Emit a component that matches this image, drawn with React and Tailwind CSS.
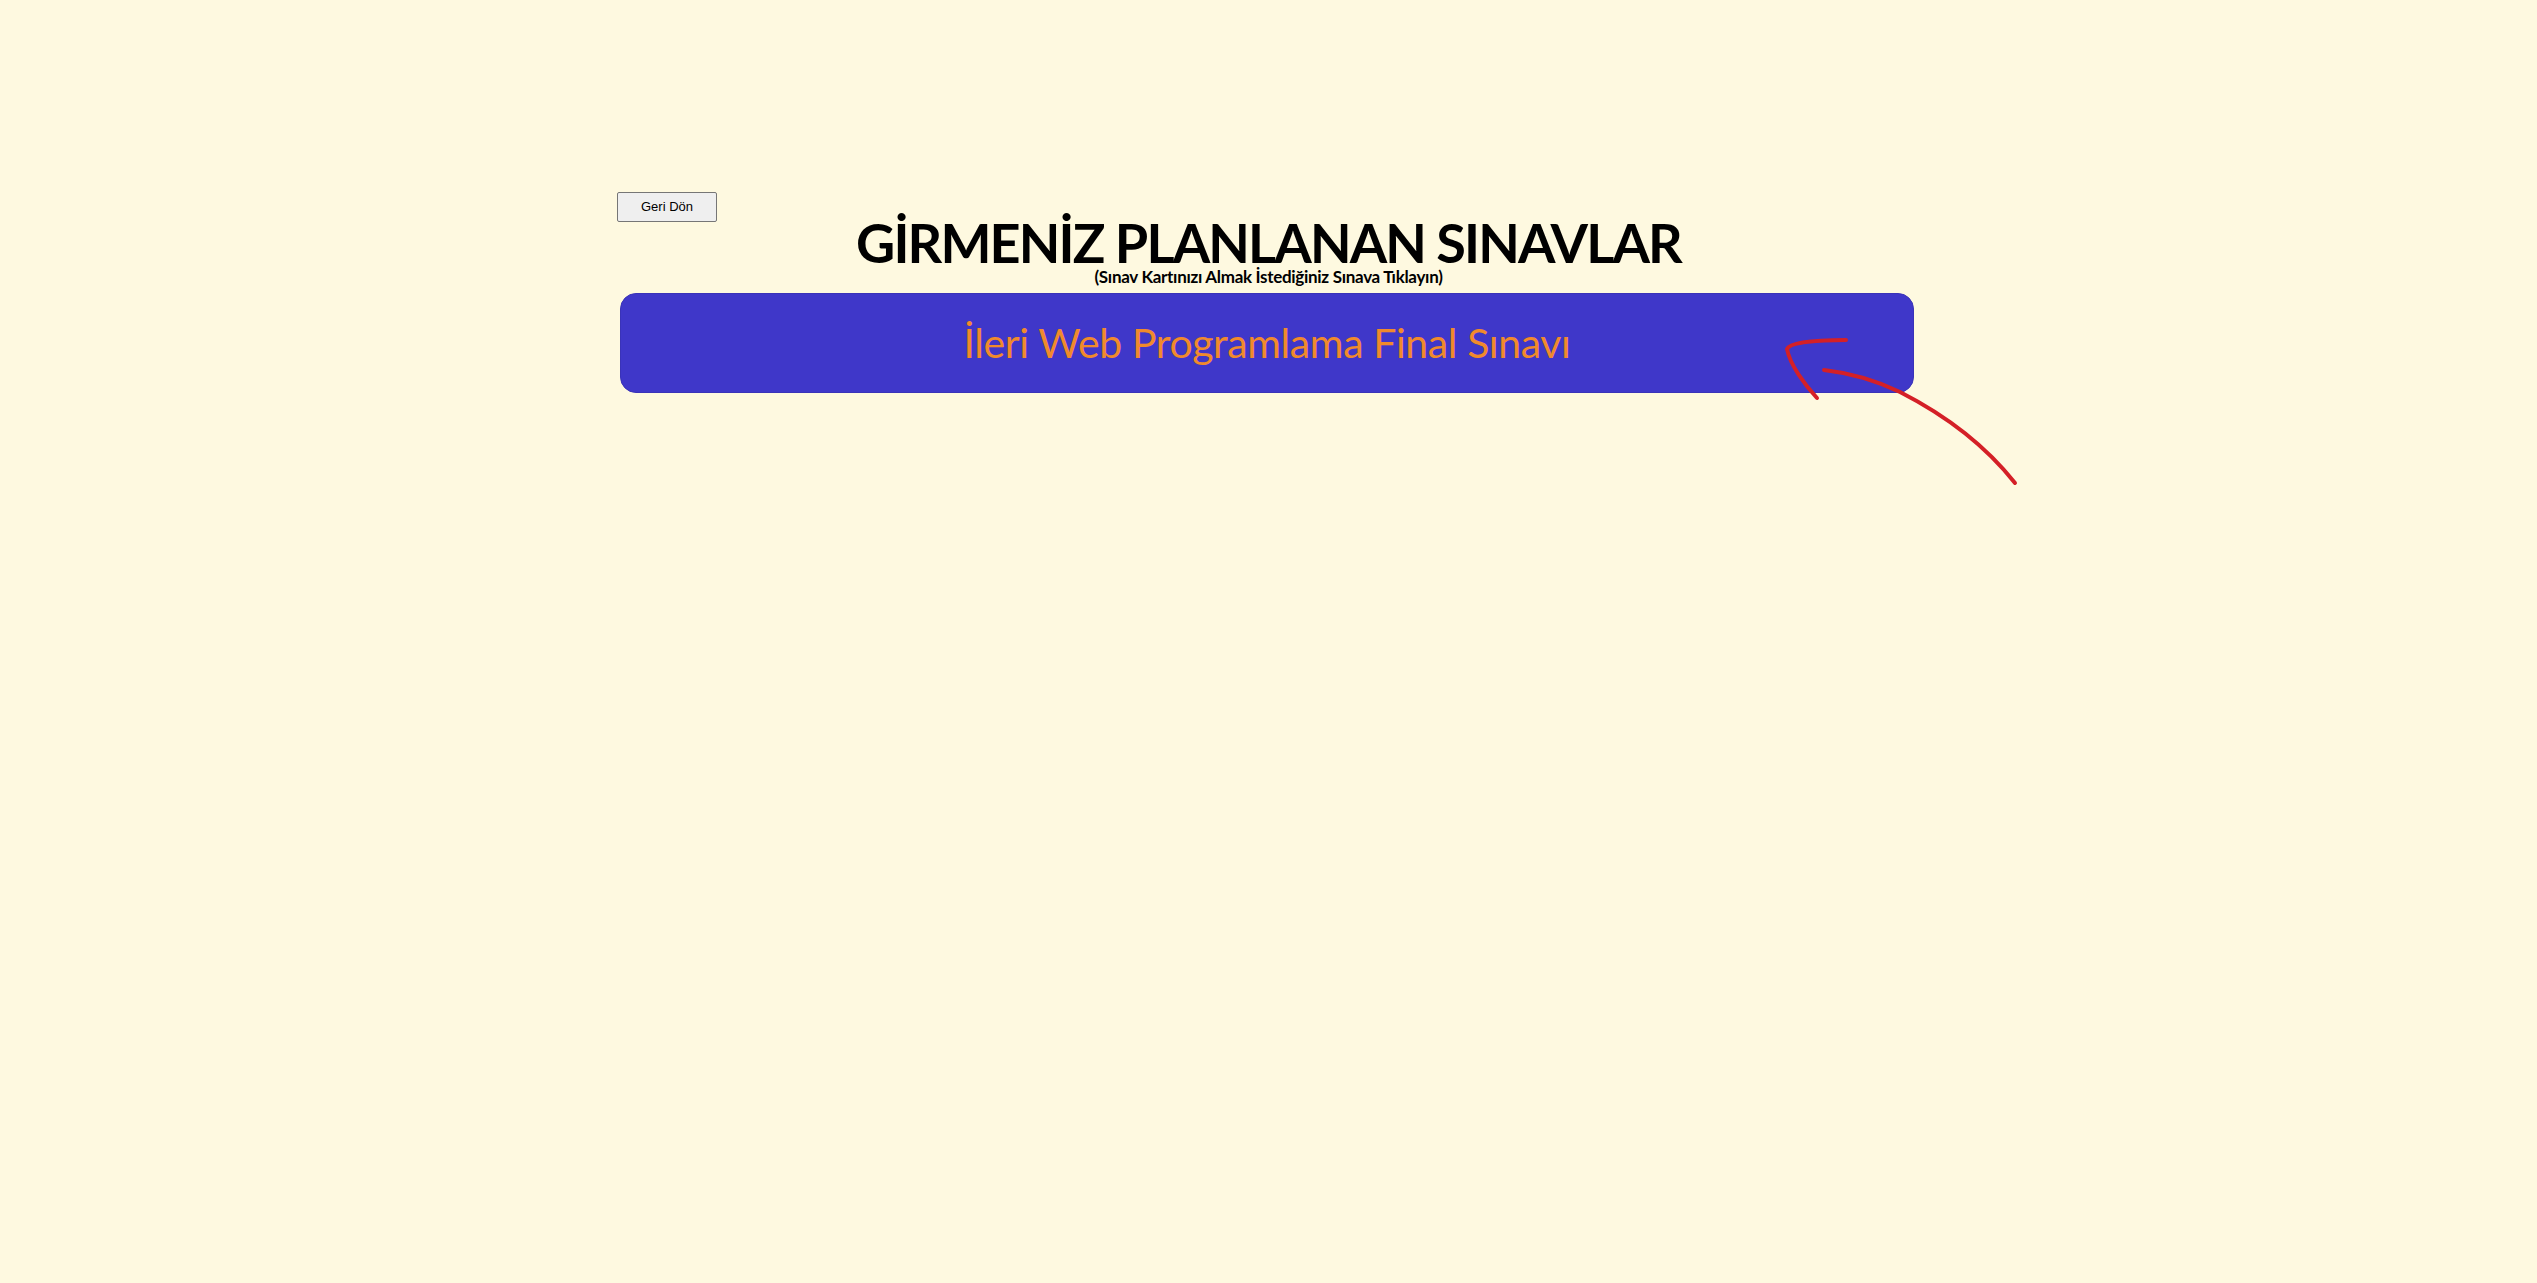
export default function App() {
  return (
    <div className="min-h-[1283px] w-full bg-[#fef9e0] relative" style={{ fontFamily: "Lato, 'Open Sans', sans-serif" }}>
      <div className="w-[1303px] mx-auto pt-[192px] flex flex-col">
        <div className="flex">
          <button className="h-[30px] w-[100px] border border-[#767676] bg-[#efefef] rounded-[2px] text-[13px] text-black" style={{ fontFamily: "'Liberation Sans', Arial, sans-serif" }}>
            Geri Dön
          </button>
        </div>
        <h1 className="text-center text-[54px] font-bold leading-[50px] text-black tracking-[-1.85px] -mt-[4px]">
          GİRMENİZ PLANLANAN SINAVLAR
        </h1>
        <p className="text-center text-[17px] font-bold leading-[18px] text-black tracking-[-0.3px]">
          (Sınav Kartınızı Almak İstediğiniz Sınava Tıklayın)
        </p>
        <div className="mt-[7px] ml-[3px] w-[1294px] h-[100px] rounded-[16px] bg-[#3f37c9] border border-[#3a33b8] flex items-center justify-center">
          <span className="text-[41px] text-[#f08a2c] tracking-[-0.4px]">İleri Web Programlama Final Sınavı</span>
        </div>
      </div>
      <svg className="absolute left-0 top-0 pointer-events-none" width="2537" height="1283" viewBox="0 0 2537 1283">
        <path d="M1846 340 C1820 340 1790 342 1787 349 C1790 365 1805 385 1817 398" fill="none" stroke="#d42027" strokeWidth="4" strokeLinecap="round" strokeLinejoin="round" />
        <path d="M1824 370 C1850 373 1875 380 1900 392 C1945 415 1985 445 2015 483" fill="none" stroke="#d42027" strokeWidth="4" strokeLinecap="round" />
      </svg>
    </div>
  );
}
